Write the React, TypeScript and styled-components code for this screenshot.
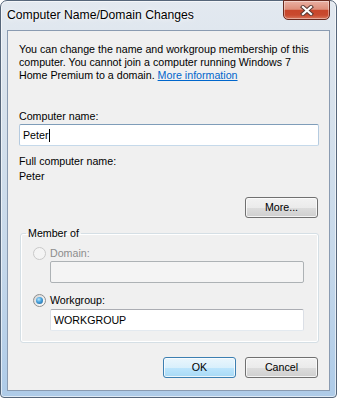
import React from 'react'
import styled, { createGlobalStyle } from 'styled-components'

const GlobalStyle = createGlobalStyle`
  html, body {
    margin: 0;
    padding: 0;
    background: #ffffff;
  }
  body {
    font-family: 'Liberation Sans', Arial, sans-serif;
  }
`

const Window = styled.div`
  box-sizing: border-box;
  width: 337px;
  height: 398px;
  display: flex;
  flex-direction: column;
  padding: 0 6px 6px 6px;
  border: 1px solid #56667a;
  border-radius: 7px 7px 4px 4px;
  background: linear-gradient(180deg, #e3e9f0 0%, #d8e2ec 25%, #c6d8ea 65%, #aecbe8 100%);
  box-shadow: inset 0 0 0 1px rgba(255, 255, 255, 0.6);
`

const TitleBar = styled.div`
  height: 29px;
  display: flex;
  align-items: flex-start;
  justify-content: space-between;
  flex-shrink: 0;
`

const Title = styled.div`
  margin-top: 7px;
  font-size: 12.2px;
  line-height: 14px;
  color: #000000;
  text-shadow: 0 0 6px rgba(255, 255, 255, 0.95), 0 0 2px #ffffff;
`

const CloseButton = styled.div`
  box-sizing: border-box;
  width: 47px;
  height: 20px;
  margin-top: -1px;
  display: flex;
  align-items: center;
  justify-content: center;
  border: 1px solid #6a2a1f;
  border-radius: 0 0 5px 5px;
  background: linear-gradient(180deg, #eab0a3 0%, #de8e7a 46%, #c8462b 52%, #c94a2f 78%, #d8765c 100%);
  box-shadow: inset 0 0 0 1px rgba(255, 255, 255, 0.4);
`

const Client = styled.div`
  flex: 1;
  display: flex;
  flex-direction: column;
  padding: 12px 10px 12px 11px;
  border: 1px solid #8a9bb1;
  background: #f0f0f0;
  font-size: 10.67px;
  line-height: 13px;
  color: #000000;
`

const Intro = styled.p`
  margin: 0;
`

const Link = styled.a`
  color: #0066cc;
  text-decoration: underline;
  cursor: pointer;
`

const Label = styled.div<{ $gap?: number; $disabled?: boolean }>`
  margin-top: ${p => p.$gap ?? 0}px;
  color: ${p => (p.$disabled ? '#8d8d8d' : '#000000')};
`

const TextBox = styled.div<{ $state?: 'focus' | 'normal' | 'disabled'; $gap?: number; $indent?: number }>`
  box-sizing: border-box;
  height: 22px;
  margin-top: ${p => p.$gap ?? 0}px;
  margin-left: ${p => p.$indent ?? 0}px;
  padding: 0 3px;
  display: flex;
  align-items: center;
  border: 1px solid;
  border-radius: 2px;
  border-color: ${p =>
    p.$state === 'focus'
      ? '#7f9db9 #b5cbe0 #c5d9ea #b5cbe0'
      : p.$state === 'disabled'
      ? '#adb2b5'
      : '#abadb3 #dbdfe6 #e3e9ef #dbdfe6'};
  background: ${p => (p.$state === 'disabled' ? '#f4f4f4' : '#ffffff')};
  white-space: nowrap;
`

const Caret = styled.span`
  display: inline-block;
  width: 1px;
  height: 13px;
  margin-left: 1px;
  background: #000000;
`

const ButtonRow = styled.div<{ $gap?: number; $auto?: boolean }>`
  display: flex;
  justify-content: flex-end;
  gap: 9px;
  padding-right: 1px;
  margin-top: ${p => (p.$auto ? 'auto' : `${p.$gap ?? 0}px`)};
`

const Button = styled.div<{ $default?: boolean }>`
  box-sizing: border-box;
  width: 73px;
  height: 21px;
  display: flex;
  align-items: center;
  justify-content: center;
  border: 1px solid ${p => (p.$default ? '#3c7fb1' : '#707070')};
  border-radius: 3px;
  background: ${p =>
    p.$default
      ? 'linear-gradient(180deg, #eaf6fd 0%, #d9f0fc 50%, #bee6fd 50%, #a7d9f5 100%)'
      : 'linear-gradient(180deg, #f2f2f2 0%, #ebebeb 50%, #dddddd 50%, #cfcfcf 100%)'};
  box-shadow: inset 0 0 0 1px rgba(252, 252, 252, 0.8);
  color: #000000;
`

const Group = styled.fieldset`
  margin: 9px 0 0 1px;
  padding: 6px 14px 11px 12px;
  min-width: 0;
  border: 1px solid #d5dfe5;
  border-radius: 3px;
  box-shadow: inset 0 0 0 1px #ffffff;
`

const Legend = styled.legend`
  margin-left: -7px;
  padding: 0 2px;
  line-height: 13px;
`

const RadioRow = styled.div<{ $gap?: number; $disabled?: boolean }>`
  height: 14px;
  margin-top: ${p => p.$gap ?? 0}px;
  display: flex;
  align-items: center;
  gap: 4px;
  color: ${p => (p.$disabled ? '#8d8d8d' : '#000000')};
`

const Radio = styled.span<{ $checked?: boolean; $disabled?: boolean }>`
  box-sizing: border-box;
  width: 13px;
  height: 13px;
  flex-shrink: 0;
  display: flex;
  align-items: center;
  justify-content: center;
  border-radius: 50%;
  border: 1px solid ${p => (p.$disabled ? '#c9c9c9' : '#8e8f8f')};
  background: ${p =>
    p.$disabled ? '#f4f4f4' : 'linear-gradient(135deg, #d2d2d2 0%, #f0f0f0 60%, #ffffff 100%)'};

  &::after {
    content: '';
    display: ${p => (p.$checked ? 'block' : 'none')};
    width: 7px;
    height: 7px;
    border-radius: 50%;
    background: radial-gradient(circle at 40% 35%, #b8e6fc 0%, #46a0db 45%, #1a5a8e 100%);
  }
`

function CloseGlyph() {
  return (
    <svg width="14" height="11" viewBox="0 0 14 11">
      <path d="M3 2 L11 9 M11 2 L3 9" stroke="#5b3b35" strokeWidth="4.2" strokeLinecap="square" />
      <path d="M3 2 L11 9 M11 2 L3 9" stroke="#ffffff" strokeWidth="2.2" strokeLinecap="square" />
    </svg>
  )
}

export default function App() {
  return (
    <>
      <GlobalStyle />
      <Window>
        <TitleBar>
          <Title>Computer Name/Domain Changes</Title>
          <CloseButton>
            <CloseGlyph />
          </CloseButton>
        </TitleBar>
        <Client>
          <Intro>
            You can change the name and workgroup membership of this computer. You cannot join a
            computer running Windows 7 Home Premium to a domain.{' '}
            <Link>More information</Link>
          </Intro>

          <Label $gap={28}>Computer name:</Label>
          <TextBox $state="focus" $gap={1}>
            Peter
            <Caret />
          </TextBox>

          <Label $gap={9}>Full computer name:</Label>
          <Label $gap={2}>Peter</Label>

          <ButtonRow $gap={14}>
            <Button>More...</Button>
          </ButtonRow>

          <Group>
            <Legend>Member of</Legend>
            <RadioRow $disabled>
              <Radio $disabled />
              Domain:
            </RadioRow>
            <TextBox $state="disabled" $gap={1} $indent={17} />
            <RadioRow $gap={10}>
              <Radio $checked />
              Workgroup:
            </RadioRow>
            <TextBox $state="normal" $gap={2} $indent={17}>
              WORKGROUP
            </TextBox>
          </Group>

          <ButtonRow $auto>
            <Button $default>OK</Button>
            <Button>Cancel</Button>
          </ButtonRow>
        </Client>
      </Window>
    </>
  )
}
